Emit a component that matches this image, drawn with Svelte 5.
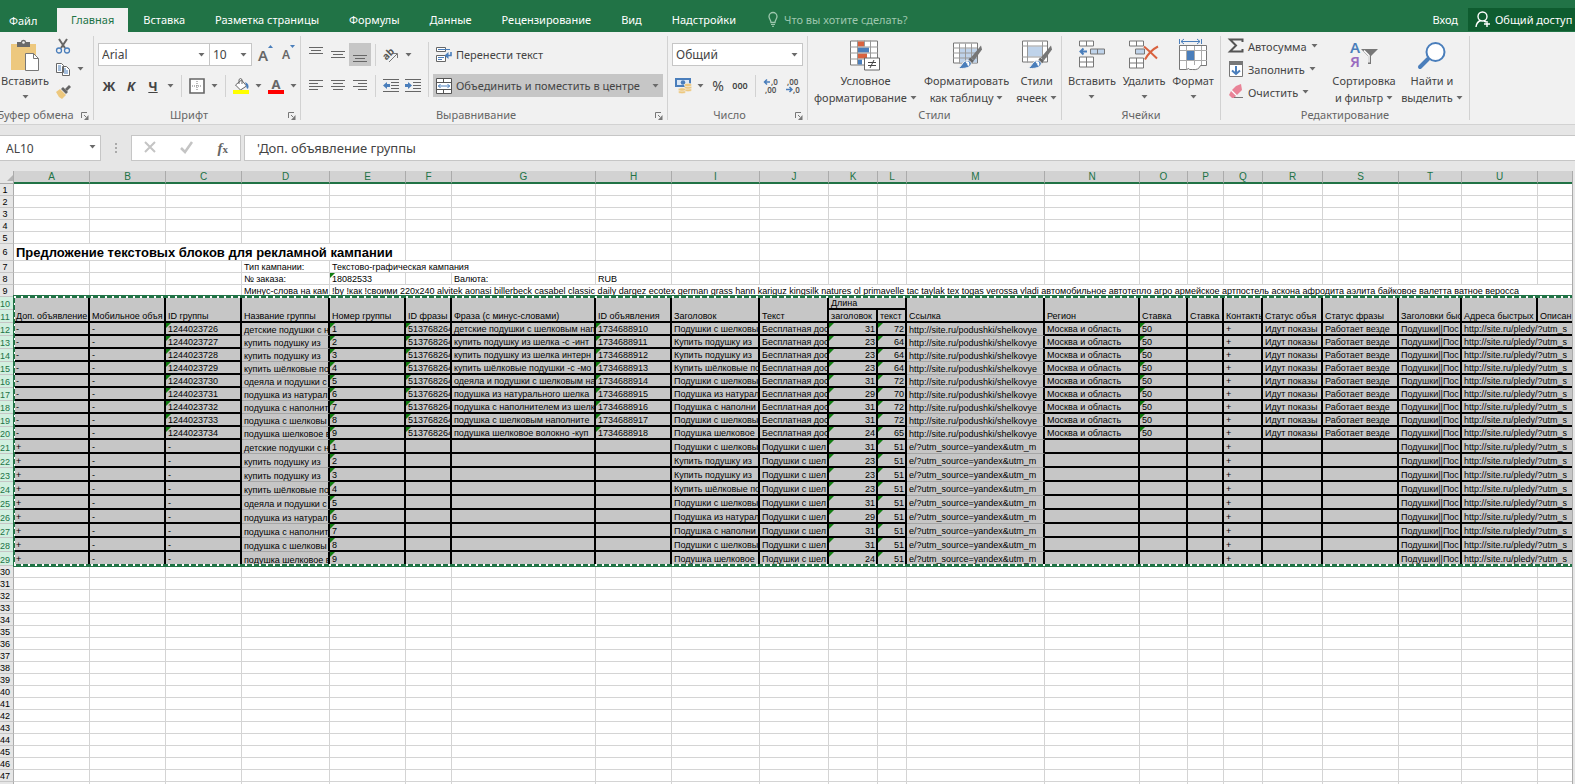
<script>
  const tabs = ['Вставка', 'Разметка страницы', 'Формулы', 'Данные', 'Рецензирование', 'Вид', 'Надстройки'];

  const columns = [
    ['A', 76], ['B', 76], ['C', 76], ['D', 88], ['E', 76], ['F', 46], ['G', 144], ['H', 76],
    ['I', 88], ['J', 69], ['K', 49], ['L', 29], ['M', 138], ['N', 95], ['O', 48], ['P', 36],
    ['Q', 39], ['R', 60], ['S', 76], ['T', 63], ['U', 76], ['V', 76]
  ];

  const titles = {
    A: 'Доп. объявление', B: 'Мобильное объя', C: 'ID группы', D: 'Название группы',
    E: 'Номер группы', F: 'ID фразы', G: 'Фраза (с минус-словами)', H: 'ID объявления',
    I: 'Заголовок', J: 'Текст', M: 'Ссылка', N: 'Регион', O: 'Ставка', P: 'Ставка',
    Q: 'Контакты', R: 'Статус объя', S: 'Статус фразы', T: 'Заголовки быс',
    U: 'Адреса быстрых', V: 'Описан'
  };

  const minusWords =
    '!by !как !своими 220x240 alvitek aonasi billerbeck casabel classic daily dargez ecotex german grass hann kariguz kingsilk natures ol primavelle tac taylak tex togas verossa vladi автомобильное автотепло агро армейское артпостель аскона афродита аэлита байковое валетта ватное веросса';

  const groups = [
    ['детские подушки с н', 'детские подушки с шелковым нап', 'Подушки с шелковы', 31, 72],
    ['купить подушку из ', 'купить подушку из шелка -с -инт', 'Купить подушку из ', 23, 64],
    ['купить подушку из ', 'купить подушку из шелка интерн', 'Купить подушку из ', 23, 64],
    ['купить шёлковые по', 'купить шёлковые подушки -с -мо', 'Купить шёлковые по', 23, 64],
    ['одеяла и подушки с', 'одеяла и подушки с шелковым на', 'Подушки с шелковы', 31, 72],
    ['подушка из натурал', 'подушка из натурального шелка', 'Подушка из натурал', 29, 70],
    ['подушка с наполнит', 'подушка с наполнителем из шелк', 'Подушка с наполни', 31, 72],
    ['подушка с шелковы', 'подушка с шелковым наполните', 'Подушки с шелковы', 31, 72],
    ['подушка шелковое в', 'подушка шелковое волокно -куп', 'Подушка шелковое', 24, 65]
  ];

  const mainRows = groups.map((g, i) => ({
    n: 12 + i,
    cells: {
      A: '-', B: '-', C: 1244023726 + i, D: g[0], E: i + 1, F: '513768264', G: g[1],
      H: 1734688910 + i, I: g[2], J: 'Бесплатная дос', K: g[3], L: g[4],
      M: 'http://site.ru/podushki/shelkovye', N: 'Москва и область', O: 50, P: '', Q: '+',
      R: 'Идут показы', S: 'Работает везде', T: 'Подушки||Пос', U: 'http://site.ru/pledy/?utm_s'
    }
  }));

  const extraRows = groups.map((g, i) => ({
    n: 21 + i,
    cells: {
      A: '+', B: '-', C: '-', D: g[0], E: i + 1, F: '', G: '', H: '', I: g[2],
      J: 'Подушки с шел', K: g[3], L: 51, M: 'e/?utm_source=yandex&utm_m', N: '', O: '', P: '',
      Q: '+', R: '', S: '', T: 'Подушки||Пос', U: 'http://site.ru/pledy/?utm_s'
    }
  }));

  const names = columns.map((c) => c[0]);
  const bodyNames = names.slice(0, -1);
  const emptyRows = Array.from({ length: 18 }, (_, i) => 30 + i);

  function marked(row, name) {
    if ('EKL'.includes(name)) return true;
    return row.n < 21 && 'CFHO'.includes(name);
  }
</script>

{#snippet caret()}
  <svg class="caret" width="7" height="4" viewBox="0 0 7 4"><path d="M0.5 0h6L3.5 3.5z" fill="#6a6a6a" /></svg>
{/snippet}

{#snippet launcher(name)}
  <button class="launcher" aria-label={name}>
    <svg width="8" height="8" viewBox="0 0 8 8"><path d="M.5 6V.5H6M3 3l2 2" fill="none" stroke="#777" /><path d="M7.500 3v5H3z" fill="#777" /></svg>
  </button>
{/snippet}

{#snippet lines(list)}
  <svg width="16" height="16" viewBox="0 0 16 16" shape-rendering="crispEdges">
    {#each list as [x, y, w]}
      <rect {x} {y} width={w} height="1" fill="#666" />
    {/each}
  </svg>
{/snippet}

{#snippet brush()}
  <path d="M29 5l1 4-8 11-3-3z" fill="#777" />
  <path d="M18 17l4 3-2 3-4-3z" fill="#666" />
  <path d="M15 20c3 0 5 2 4 4-2 4-7 4-13 4 4-2 4-7 9-8z" fill="#4a7ebb" stroke="#f1f1f1" stroke-width="1" />
  <path d="M14 22c2-1 3 1 2 3" stroke="#fff" fill="none" stroke-width="2" />
{/snippet}

{#snippet blanks(list)}
  {#each list as _}<td></td>{/each}
{/snippet}

<div class="window">
  <nav class="tabs">
    <a class="file" href="#file">Файл</a>
    <a class="active" href="#home">Главная</a>
    {#each tabs as tab}
      <a href="#{tab}">{tab}</a>
    {/each}
    <a class="tell" href="#tell">
      <svg width="10" height="15" viewBox="0 0 10 15"><path d="M3 10.500C3 8 1 7 1 4.500a4 4 0 0 1 8 0C9 7 7 8 7 10.500z" fill="none" stroke="#9ec7ae" stroke-width="1.300" /><path d="M3 12.500h4M4 14.300h2" stroke="#9ec7ae" /></svg>
      Что вы хотите сделать?
    </a>
    <a class="login" href="#login">Вход</a>
    <button class="share">
      <svg width="16" height="17" viewBox="0 0 16 17" fill="none" stroke="#fff" stroke-width="1.400"><circle cx="7.500" cy="5.500" r="4.500" /><path d="M5.500 9.500C3 10.500 1.500 12 1 16M9 10l2 1M12 10v6M9 13h6" /></svg>
      Общий доступ
    </button>
  </nav>

  <div class="ribbon">
    <section class="group clipboard">
      <div class="body">
        <button class="big">
          <svg width="30" height="32" viewBox="0 0 30 32"><path d="M1 4h25v26H1z" fill="#edc87e" /><path d="M7 2h4c0-3 5-3 5 0h4v5H7z" fill="#6a6a6a" /><circle cx="13.500" cy="2.500" r="1.300" fill="#f1f1f1" /><path d="M15.500 13.500h8l5 5v12h-13z" fill="#fff" stroke="#777" /><path d="M23.500 13.500v5h5" fill="none" stroke="#777" /></svg>
          <span>Вставить</span>
          {@render caret()}
        </button>
        <div class="stack">
          <button aria-label="Вырезать"><svg width="16" height="16" viewBox="0 0 16 16"><path d="M4 1l6 9M12 1L6 10" stroke="#666" stroke-width="2" /><circle cx="4" cy="12.500" r="2.500" fill="none" stroke="#4a7ebb" stroke-width="1.300" /><circle cx="12" cy="12.500" r="2.500" fill="none" stroke="#4a7ebb" stroke-width="1.300" /></svg></button>
          <button aria-label="Копировать"><svg width="16" height="16" viewBox="0 0 16 16"><path d="M1.500 2.500h5l2 2v7h-7zM7.500 5.500h4l3 3v6h-7z" fill="#fff" stroke="#666" /><path d="M3 5h3M3 7h3M3 9h3M9 8h2M9 10h4M9 12h4" stroke="#4a7ebb" /></svg>{@render caret()}</button>
          <button aria-label="Формат по образцу"><svg width="16" height="16" viewBox="0 0 16 16"><path d="M1 8l4-3 6 6-4 4-3-2z" fill="#edc87e" /><path d="M6 5l2-2 5 5-2 2z" fill="#666" /><path d="M10 5l4-4 2 2-4 4z" fill="#666" /></svg></button>
        </div>
      </div>
      <footer><h2>Буфер обмена</h2>{@render launcher('Буфер обмена')}</footer>
    </section>

    <section class="group font">
      <div class="body rows">
        <div class="line">
          <span class="combo family"><select aria-label="Шрифт"><option>Arial</option></select>{@render caret()}</span>
          <span class="combo size"><select aria-label="Размер"><option>10</option></select>{@render caret()}</span>
          <button class="grow" aria-label="Увеличить размер"><b>A</b><svg width="5" height="3" viewBox="0 0 5 3"><path d="M0 3h5L2.500 0z" fill="#4a7ebb" /></svg></button>
          <button class="grow small" aria-label="Уменьшить размер"><b>A</b><svg width="5" height="3" viewBox="0 0 5 3"><path d="M0 0h5L2.500 3z" fill="#4a7ebb" /></svg></button>
        </div>
        <div class="line">
          <button class="tool letter"><b>Ж</b></button>
          <button class="tool letter"><b><i>К</i></b></button>
          <button class="tool letter"><b><u>Ч</u></b></button>
          <button class="drop" aria-label="Подчеркивание">{@render caret()}</button>
          <span class="bar"></span>
          <button class="tool" aria-label="Границы"><svg width="16" height="16" viewBox="0 0 16 16"><path d="M1 1h14v14H1z" fill="#fff" stroke="#666" stroke-width="1.600" /><path d="M8 3v10M3 8h10" stroke="#777" stroke-dasharray="1 1" /></svg></button>
          <button class="drop" aria-label="Виды границ">{@render caret()}</button>
          <span class="bar"></span>
          <button class="tool" aria-label="Цвет заливки"><svg width="16" height="16" viewBox="0 0 16 16"><path d="M2.500 7l6-5 5 6-6 4z" fill="#fff" stroke="#666" /><path d="M6 6V1.500q1.500-2 3 0V6" fill="none" stroke="#666" /><path d="M12 4q5 2 3 7-2-1-2-4z" fill="#4a7ebb" /><path d="M0 12h16v4H0z" fill="#ff0" /></svg></button>
          <button class="drop" aria-label="Выбор заливки">{@render caret()}</button>
          <button class="tool color" aria-label="Цвет текста"><b>A</b></button>
          <button class="drop" aria-label="Выбор цвета текста">{@render caret()}</button>
        </div>
      </div>
      <footer><h2>Шрифт</h2>{@render launcher('Шрифт')}</footer>
    </section>

    <section class="group align">
      <div class="body">
        <div class="rows aligns">
          <div class="line">
            <button class="tool" aria-label="По верхнему краю">{@render lines([[1, 0, 14], [3, 3, 10], [1, 6, 14]])}</button>
            <button class="tool" aria-label="По середине">{@render lines([[1, 4, 14], [3, 7, 10], [1, 10, 14]])}</button>
            <button class="tool on" aria-label="По нижнему краю">{@render lines([[1, 8, 14], [3, 11, 10], [1, 14, 14]])}</button>
            <span class="bar"></span>
            <button class="tool" aria-label="Ориентация"><svg width="16" height="16" viewBox="0 0 16 16"><text x="0" y="10" font-size="10" font-weight="700" fill="#555" transform="rotate(-45 6 8)">ab</text><path d="M6 15l8-8M10 6.500h4.500V11" fill="none" stroke="#777" /></svg></button>
            <button class="drop" aria-label="Выбор ориентации">{@render caret()}</button>
          </div>
          <div class="line">
            <button class="tool" aria-label="По левому краю">{@render lines([[1, 2, 14], [1, 5, 9], [1, 8, 14], [1, 11, 9]])}</button>
            <button class="tool" aria-label="По центру">{@render lines([[1, 2, 14], [3, 5, 10], [1, 8, 14], [3, 11, 10]])}</button>
            <button class="tool" aria-label="По правому краю">{@render lines([[1, 2, 14], [6, 5, 9], [1, 8, 14], [6, 11, 9]])}</button>
            <span class="bar"></span>
            <button class="tool" aria-label="Уменьшить отступ"><svg width="16" height="14" viewBox="0 0 16 14"><path d="M0 .5h16M8 3.500h8M8 6.500h8M8 9.500h8M0 12.500h16" stroke="#666" /><path d="M0 6.500l4-3.500v2h3v3H4v2z" fill="#4a7ebb" /></svg></button>
            <button class="tool" aria-label="Увеличить отступ"><svg width="16" height="14" viewBox="0 0 16 14"><path d="M0 .5h16M8 3.500h8M8 6.500h8M8 9.500h8M0 12.500h16" stroke="#666" /><path d="M7 6.500L3 3v2H0v3h3v2z" fill="#4a7ebb" /></svg></button>
          </div>
        </div>
        <span class="bar tall"></span>
        <div class="rows">
          <button class="wide"><svg width="16" height="16" viewBox="0 0 16 16"><path d="M.5 .5h9v4h-9zM.5 8.500h9v6h-9z" fill="#fff" stroke="#666" /><path d="M2 2.500h12M2 10.500h6M2 12.500h4" stroke="#4a7ebb" /><path d="M15 5v3.500h-4" fill="none" stroke="#4a7ebb" stroke-width="1.600" /><path d="M8.500 8.500l4-3.500v7z" fill="#4a7ebb" /></svg>Перенести текст</button>
          <button class="wide on"><svg width="16" height="16" viewBox="0 0 16 16"><path d="M.5 .5h15v15H.5z" fill="#fff" stroke="#555" /><path d="M.5 4.500h15M.5 11.500h15M7.500 .5v4M7.500 11.500v4" stroke="#555" /><path d="M2 8h12M4.500 6L2.500 8l2 2M11.500 6l2 2-2 2" fill="none" stroke="#4a7ebb" /></svg>Объединить и поместить в центре{@render caret()}</button>
        </div>
      </div>
      <footer><h2>Выравнивание</h2>{@render launcher('Выравнивание')}</footer>
    </section>

    <section class="group number">
      <div class="body rows">
        <div class="line">
          <span class="combo format"><select aria-label="Числовой формат"><option>Общий</option></select>{@render caret()}</span>
        </div>
        <div class="line">
          <button class="tool" aria-label="Финансовый формат"><svg width="17" height="17" viewBox="0 0 17 17"><path d="M0 1h16v9H0z" fill="#4a7ebb" /><path d="M2 3h12v5H2z" fill="#dce8f5" /><circle cx="8" cy="5.500" r="2.300" fill="#4a7ebb" /><g fill="#edc87e" stroke="#f1f1f1" stroke-width=".6"><ellipse cx="13" cy="13" rx="3.800" ry="1.700" /><ellipse cx="13" cy="10.500" rx="3.800" ry="1.700" /><ellipse cx="13" cy="8" rx="3.800" ry="1.700" /><ellipse cx="7" cy="15" rx="3.800" ry="1.700" /><ellipse cx="7" cy="12.500" rx="3.800" ry="1.700" /></g></svg></button>
          <button class="drop" aria-label="Выбор валюты">{@render caret()}</button>
          <button class="tool percent">%</button>
          <button class="tool zeros">000</button>
          <span class="bar"></span>
          <button class="tool" aria-label="Увеличить разрядность"><svg width="16" height="16" viewBox="0 0 16 16"><path d="M1 4h6M4 1.500L1.500 4 4 6.500" fill="none" stroke="#4a7ebb" stroke-width="1.500" /><text x="8" y="7" class="digits">,0</text><text x="2" y="15" class="digits">,00</text></svg></button>
          <button class="tool" aria-label="Уменьшить разрядность"><svg width="16" height="16" viewBox="0 0 16 16"><text x="2" y="7" class="digits">,00</text><path d="M1 11.500h6M4.500 9L7 11.500 4.500 14" fill="none" stroke="#4a7ebb" stroke-width="1.500" /><text x="8" y="15" class="digits">,0</text></svg></button>
        </div>
      </div>
      <footer><h2>Число</h2>{@render launcher('Число')}</footer>
    </section>

    <section class="group styles">
      <div class="body">
        <button class="big">
          <svg width="30" height="31" viewBox="0 0 30 31"><path d="M.5 .5h27v24H.5z" fill="#fff" stroke="#777" /><path d="M8 1h6v5H8zM8 13h9v5H8z" fill="#d9623f" /><path d="M8 7h11v5H8zM8 19h4v5H8z" fill="#4a7ebb" /><path d="M7.500 0v24M14.500 0v6M20.500 0v24M0 6.500h28M0 12.500h28M0 18.500h28" stroke="#999" fill="none" /><path d="M14.500 17.500h15v12h-15z" fill="#fff" stroke="#666" /><path d="M18 22h8M18 25h8M24 19.500l-4 8" stroke="#444" /></svg>
          <span>Условное</span>
          <span>форматирование{@render caret()}</span>
        </button>
        <button class="big">
          <svg width="30" height="31" viewBox="0 0 30 31"><path d="M1.500 2.500h24v20h-24z" fill="#fff" stroke="#777" /><path d="M8 8h17v14H8z" fill="#bfd3ea" /><path d="M7.500 3v20M13.500 3v20M19.500 3v20M1 7.500h24M1 12.500h24M1 17.500h24" stroke="#999" />{@render brush()}</svg>
          <span>Форматировать</span>
          <span>как таблицу{@render caret()}</span>
        </button>
        <button class="big">
          <svg width="30" height="31" viewBox="0 0 30 31"><path d="M.5 .5h25v21H.5z" fill="#fff" stroke="#777" /><path d="M6 6h14v10H6z" fill="#bfd3ea" /><path d="M5.500 1v21M20.500 1v21M0 5.500h25M0 16.500h25" stroke="#999" />{@render brush()}</svg>
          <span>Стили</span>
          <span>ячеек{@render caret()}</span>
        </button>
      </div>
      <footer><h2>Стили</h2></footer>
    </section>

    <section class="group cells">
      <div class="body">
        <button class="big">
          <svg width="28" height="31" viewBox="0 0 28 31"><path d="M1.500 .5h14v5h-14zM8.500 .5v5M1.500 16.500h14v10h-14zM8.500 16.500v10M1.500 21.500h14" fill="#fff" stroke="#777" /><path d="M12.500 8.500h14v5h-14zM19.500 8.500v5" fill="#bfd3ea" stroke="#777" /><path d="M2.500 11H9M5.500 8l-3 3 3 3" fill="none" stroke="#4a7ebb" stroke-width="2" /></svg>
          <span>Вставить</span>
          {@render caret()}
        </button>
        <button class="big">
          <svg width="30" height="31" viewBox="0 0 30 31"><path d="M.5 .5h14v5H.5zM7.500 .5v5M.5 17.500h14v10H.5zM7.500 17.500v10M.5 22.500h14" fill="#fff" stroke="#777" /><path d="M6.500 8.500h9v5h-9z" fill="#bfd3ea" stroke="#777" /><path d="M15 6q6 5 13 12M29 6q-8 4-13 13" fill="none" stroke="#d9623f" stroke-width="2" /></svg>
          <span>Удалить</span>
          {@render caret()}
        </button>
        <button class="big">
          <svg width="29" height="32" viewBox="0 0 29 32"><path d="M.5 -1v5M22.500 -1v5M2 1.500h19M5 -1L2 1.500 5 4M18 -1l3 2.500L18 4" fill="none" stroke="#4a7ebb" /><path d="M.5 5.500h27v20h-6q-2 5-8 4h-3q0-2-3 0h-7z" fill="#fff" stroke="#777" /><path d="M7.500 6v23M15.500 6v19M22.500 6v19M1 10.500h27M1 20.500h27" stroke="#aaa" /><path d="M8 11h7v9H8z" fill="#4a7ebb" /></svg>
          <span>Формат</span>
          {@render caret()}
        </button>
      </div>
      <footer><h2>Ячейки</h2></footer>
    </section>

    <section class="group editing">
      <div class="body">
        <div class="actions">
          <button><svg width="16" height="16" viewBox="0 0 16 16"><path d="M14.500 4V1.500H2l6 6-6 6h12.500V11" fill="none" stroke="#555" stroke-width="2" /></svg><span>Автосумма</span>{@render caret()}</button>
          <button><svg width="16" height="16" viewBox="0 0 16 16"><path d="M1.500 .5h13v15h-13z" fill="#fff" stroke="#777" /><path d="M1 0h14v4H1z" fill="#777" /><path d="M8 5v8M4 9.500L8 13l4-3.500" fill="none" stroke="#4a7ebb" stroke-width="2" /></svg><span>Заполнить</span>{@render caret()}</button>
          <button><svg width="16" height="16" viewBox="0 0 16 16"><path d="M8 2l5-2 1 6-5 5-5-5z" fill="#e98397" /><path d="M3 7l5 5-2 2H4L1 11z" fill="#e98397" /><path d="M3.500 6.500l5 5" stroke="#fff" /><path d="M6 13.500h9" stroke="#777" /></svg><span>Очистить</span>{@render caret()}</button>
        </div>
        <button class="big find">
          <svg width="30" height="30" viewBox="0 0 30 30"><text x="1" y="12" class="az" fill="#4a7ebb">А</text><text x="1" y="26" class="az" fill="#9a6bc0">Я</text><path d="M12 8h17l-7 7v8h-3v-8z" fill="#777" /><path d="M15 9.500l5 5v7" fill="none" stroke="#fff" stroke-width="1.500" /></svg>
          <span>Сортировка</span>
          <span>и фильтр{@render caret()}</span>
        </button>
        <button class="big find">
          <svg width="28" height="28" viewBox="0 0 28 28"><path d="M10 17l-8 8" stroke="#4a7ebb" stroke-width="4" stroke-linecap="round" /><circle cx="17.500" cy="10" r="9" fill="#fff" stroke="#4a7ebb" stroke-width="2" /></svg>
          <span>Найти и</span>
          <span>выделить{@render caret()}</span>
        </button>
      </div>
      <footer><h2>Редактирование</h2></footer>
    </section>
  </div>

  <div class="formula">
    <span class="combo name"><input aria-label="Имя" value="AL10" />{@render caret()}</span>
    <svg width="3" height="11" viewBox="0 0 3 11" fill="#aaa"><path d="M0 0h2v2H0zM0 4h2v2H0zM0 8h2v2H0z" /></svg>
    <div class="confirm">
      <button aria-label="Отмена"><svg width="12" height="12" viewBox="0 0 12 12"><path d="M1 1l10 10M11 1L1 11" stroke="#c4c4c4" stroke-width="2" /></svg></button>
      <button aria-label="Ввод"><svg width="13" height="12" viewBox="0 0 13 12"><path d="M1 7l4 4 7-10" fill="none" stroke="#c4c4c4" stroke-width="2.500" /></svg></button>
      <button class="fx"><i>f</i><sub>x</sub></button>
    </div>
    <input class="value" aria-label="Строка формул" value="'Доп. объявление группы" />
  </div>

  <div class="sheet">
    <table>
      <colgroup>
        <col style="width: 14px" />
        {#each columns as [, width]}
          <col style="width: {width}px" />
        {/each}
      </colgroup>
      <thead>
        <tr>
          <th class="corner"><svg width="6" height="6" viewBox="0 0 6 6"><path d="M6 0v6H0z" fill="#b4b4b4" /></svg></th>
          {#each bodyNames as name}<th>{name}</th>{/each}
          <th></th>
        </tr>
      </thead>
      <tbody>
        {#each [1, 2, 3, 4, 5] as n}
          <tr><th>{n}</th>{@render blanks(names)}</tr>
        {/each}
        <tr class="title"><th>6</th><td colspan="5">Предложение текстовых блоков для рекламной кампании</td>{@render blanks(names.slice(5))}</tr>
        <tr><th>7</th>{@render blanks([1, 2, 3])}<td>Тип кампании:</td><td colspan="3">Текстово-графическая кампания</td>{@render blanks(names.slice(7))}</tr>
        <tr><th>8</th>{@render blanks([1, 2, 3])}<td>№ заказа:</td><td class="mark">18082533</td><td></td><td>Валюта:</td><td>RUB</td>{@render blanks(names.slice(8))}</tr>
        <tr><th>9</th>{@render blanks([1, 2, 3])}<td>Минус-слова на кам</td><td colspan="18">{minusWords}</td></tr>
        <tr class="picked">
          <th>10</th>
          {#each names as name}
            {#if name === 'K'}
              <td colspan="2">Длина</td>
            {:else if name !== 'L'}
              <td rowspan="2">{titles[name]}</td>
            {/if}
          {/each}
        </tr>
        <tr class="picked"><th>11</th><td>заголовок</td><td>текст</td></tr>
        {#each [...mainRows, ...extraRows] as row}
          <tr class="picked" class:high={row.n > 20}>
            <th>{row.n}</th>
            {#each bodyNames as name}
              <td
                class:mark={marked(row, name)}
                class:num={name === 'K' || name === 'L'}
                class:soft={name === 'D' || name === 'M'}
                class:link={name === 'M' && row.n > 20}
                colspan={name === 'U' ? 2 : 1}>{row.cells[name]}</td>
            {/each}
          </tr>
        {/each}
        {#each emptyRows as n}
          <tr><th>{n}</th>{@render blanks(names)}</tr>
        {/each}
        <tr><th></th>{@render blanks(names)}</tr>
      </tbody>
    </table>
    <div class="ants"></div>
  </div>
</div>

<style>
  :global(body) {
    margin: 0;
    overflow: hidden;
  }

  .window {
    display: flex;
    flex-direction: column;
    height: 100vh;
    background: #e6e6e6;
    color: #444;
    font: 11px "Noto Sans", "Open Sans", sans-serif;
  }

  button,
  input,
  select {
    font: inherit;
    color: inherit;
    border: 0;
    padding: 0;
    margin: 0;
    background: none;
    white-space: nowrap;
  }

  svg {
    flex: none;
    overflow: visible;
  }

  .tabs {
    display: flex;
    align-items: stretch;
    height: 24px;
    padding-top: 8px;
    background: #217346;
    color: #fff;
    overflow: hidden;
  }

  .tabs a {
    display: flex;
    align-items: center;
    flex: none;
    padding: 0 15px 2px;
    color: inherit;
    text-decoration: none;
    white-space: nowrap;
  }

  .tabs .file {
    width: 39px;
    padding: 0 9px;
  }

  .tabs .active {
    padding: 0 14px 2px;
    background: #f1f1f1;
    color: #217346;
  }

  .tabs .tell {
    gap: 6px;
    padding-left: 17px;
    color: #9ec7ae;
  }

  .tabs .login {
    margin-left: auto;
    padding: 0 10px 2px;
  }

  .share {
    display: flex;
    align-items: center;
    gap: 4px;
    width: 107px;
    height: 23px;
    padding-left: 7px;
    background: #0e5c2f;
  }

  .ribbon {
    display: flex;
    flex: none;
    height: 92px;
    background: #f1f1f1;
    border-bottom: 1px solid #d2d2d2;
    overflow: hidden;
  }

  .group {
    display: flex;
    flex-direction: column;
    flex: none;
    box-sizing: border-box;
    height: 84px;
    margin-top: 4px;
    border-right: 1px solid #d2d2d2;
  }

  .body {
    display: flex;
    height: 70px;
  }

  .group footer {
    position: relative;
    display: flex;
    justify-content: center;
    align-items: center;
    height: 14px;
    color: #666;
  }

  .group h2 {
    margin: 4px 0 0;
    font: inherit;
    line-height: 18px;
    white-space: nowrap;
  }

  .launcher {
    position: absolute;
    right: 4px;
    bottom: 0;
    display: flex;
  }

  .clipboard { width: 94px; }
  .font { width: 207px; }
  .align { width: 367px; }
  .number { width: 140px; }
  .styles { width: 254px; }
  .cells { width: 159px; }
  .editing { width: 249px; }

  .clipboard h2 {
    margin-right: 22px;
  }

  .font h2 {
    margin-right: 16px;
  }

  .align h2 {
    margin-right: 16px;
  }

  .number h2 {
    margin-right: 16px;
  }

  .big {
    display: flex;
    flex-direction: column;
    align-items: center;
    padding-top: 4px;
  }

  .big > svg:first-child {
    height: 32px;
  }

  .big span {
    display: flex;
    align-items: center;
    gap: 3px;
    line-height: 16px;
    margin-top: 1px;
  }

  .big > .caret {
    margin-top: 6px;
  }

  .clipboard .big {
    width: 50px;
  }

  .stack {
    display: flex;
    flex-direction: column;
    gap: 7px;
    padding: 2px 0 0 5px;
  }

  .stack button {
    display: flex;
    align-items: center;
    gap: 6px;
  }

  .rows {
    display: flex;
    flex-direction: column;
    gap: 8px;
    padding-top: 7px;
  }

  .body.rows {
    height: 63px;
  }

  .line {
    display: flex;
    align-items: center;
    height: 23px;
  }

  .font .line {
    padding-left: 4px;
  }

  .combo {
    position: relative;
    display: flex;
    box-sizing: border-box;
    height: 23px;
    border: 1px solid #c6c6c6;
    background: #fff;
    font-size: 12px;
  }

  .combo select,
  .combo input {
    appearance: none;
    width: 100%;
    padding-left: 3px;
  }

  .combo .caret {
    position: absolute;
    right: 4px;
    top: 9px;
    pointer-events: none;
  }

  .family { width: 112px; }
  .size { width: 43px; margin-left: -1px; }
  .format { width: 131px; margin-left: 4px; }

  .grow {
    display: flex;
    align-items: flex-start;
    margin-left: 6px;
    color: #666;
    font-size: 15px;
  }

  .grow b {
    font-weight: 600;
    line-height: 20px;
  }

  .grow.small {
    margin-left: 9px;
    font-size: 12px;
  }

  .tool {
    display: flex;
    align-items: center;
    justify-content: center;
    width: 22px;
    height: 23px;
  }

  .drop {
    display: flex;
    justify-content: center;
    width: 13px;
  }

  .letter {
    font-size: 13px;
  }

  .color b {
    width: 16px;
    height: 16px;
    line-height: 12px;
    font-size: 13px;
    box-sizing: border-box;
    color: #666;
    border-bottom: 4px solid red;
  }

  .bar {
    width: 1px;
    height: 22px;
    margin: 0 4px;
    background: #d2d2d2;
  }

  .bar.tall {
    height: 55px;
    margin: 6px 4px 0;
  }

  .on {
    background: #c6c6c6;
  }

  .aligns {
    width: 123px;
    padding-left: 4px;
    box-sizing: border-box;
  }

  .wide {
    display: flex;
    align-items: center;
    gap: 4px;
    width: 230px;
    height: 23px;
    padding-left: 3px;
    box-sizing: border-box;
  }

  .wide .caret {
    margin-left: auto;
    margin-right: 4px;
  }

  .number .line:last-child {
    padding-left: 4px;
  }

  .percent {
    font-size: 14px;
  }

  .zeros {
    font-size: 9px;
    font-weight: 600;
  }

  .digits {
    font: 600 8px "Noto Sans", sans-serif;
    fill: #555;
  }

  .az {
    font: 600 15px "Noto Sans", sans-serif;
  }

  .styles .body {
    justify-content: space-between;
    padding: 0 4px 0 6px;
  }

  .cells .body {
    justify-content: space-between;
    padding: 0 6px;
  }

  .editing .body {
    padding-left: 7px;
  }

  .actions {
    display: flex;
    flex-direction: column;
    width: 102px;
    gap: 3px;
  }

  .actions button {
    display: flex;
    align-items: center;
    gap: 4px;
    height: 20px;
  }

  .find {
    width: 68px;
  }

  .formula {
    display: flex;
    flex: none;
    align-items: center;
    height: 46px;
    font-size: 13px;
  }

  .name {
    width: 101px;
    height: 26px;
    border-left: 0;
  }

  .name input {
    padding-left: 6px;
  }

  .name + svg {
    margin: 0 13px 0 14px;
  }

  .confirm {
    display: flex;
    align-items: center;
    justify-content: space-around;
    box-sizing: border-box;
    width: 110px;
    height: 26px;
    margin-right: 3px;
    border: 1px solid #c6c6c6;
    background: #fff;
  }

  .fx {
    font: bold 15px "Liberation Serif", serif;
    color: #666;
  }

  .fx sub {
    font-size: 11px;
    vertical-align: baseline;
  }

  .formula .value {
    flex: 1;
    box-sizing: border-box;
    height: 26px;
    padding-left: 12px;
    border: 1px solid #c6c6c6;
    border-right: 0;
    background: #fff;
  }

  .sheet {
    position: relative;
    flex: 1;
    margin-right: 2px;
    border-right: 1px solid #ababab;
    background: #fff;
    overflow: hidden;
  }

  table {
    width: 1614px;
    table-layout: fixed;
    border-collapse: separate;
    border-spacing: 0;
    color: #000;
    font: 9px "Liberation Sans", Arial, sans-serif;
  }

  td,
  th {
    height: 12px;
    padding: 0;
    box-sizing: border-box;
    border: 0 solid #d4d4d4;
    border-width: 0 1px 1px 0;
    line-height: 10px;
    font-weight: 400;
    white-space: nowrap;
    overflow: hidden;
    vertical-align: bottom;
  }

  td {
    position: relative;
    padding-left: 2px;
    text-align: left;
  }

  thead th {
    height: 13px;
    background: #d2d2d2;
    color: #217346;
    font-size: 10px;
    border-width: 0 1px 2px 0;
    border-color: #ababab;
    border-bottom-color: #217346;
  }

  thead .corner {
    background: #e6e6e6;
    border-bottom: 1px solid #ababab;
    text-align: right;
  }

  tbody th {
    padding-right: 3px;
    background: #e6e6e6;
    border-color: #ababab;
    border-bottom-color: #c6c6c6;
    direction: rtl;
    text-align: center;
  }

  .title td,
  .title th {
    height: 17px;
  }

  .title td {
    font-size: 13px;
    font-weight: 700;
    line-height: 15px;
  }

  .title th {
    vertical-align: middle;
  }

  .picked th {
    background: #d2f0e0;
    color: #217346;
    border-right: 1px solid #217346;
  }

  .picked td,
  .picked th {
    height: 13px;
  }

  .high td,
  .high th {
    height: 14px;
  }

  .picked td {
    background: #c6c6c6;
    border-color: #000;
    border-width: 0 2px 2px 0;
  }

  .picked .soft {
    border-bottom: 1px solid #a6a6a6;
  }

  .picked .link {
    vertical-align: middle;
  }

  .picked .num {
    padding-right: 1px;
    text-align: right;
  }

  .mark::before {
    content: "";
    position: absolute;
    left: 0;
    top: 0;
    border-top: 5px solid #107c10;
    border-right: 5px solid transparent;
  }

  /* marching ants round the copied range */
  .ants {
    position: absolute;
    left: 13px;
    right: -10px;
    top: 124px;
    height: 270px;
    border: 1px solid #217346;
    background:
      repeating-linear-gradient(90deg, #fff 0 2px, #217346 2px 7px) top / 100% 2px no-repeat,
      repeating-linear-gradient(90deg, #fff 0 2px, #217346 2px 7px) bottom / 100% 2px no-repeat,
      repeating-linear-gradient(#fff 0 2px, #217346 2px 7px) left / 1px 100% no-repeat;
    pointer-events: none;
  }
</style>
